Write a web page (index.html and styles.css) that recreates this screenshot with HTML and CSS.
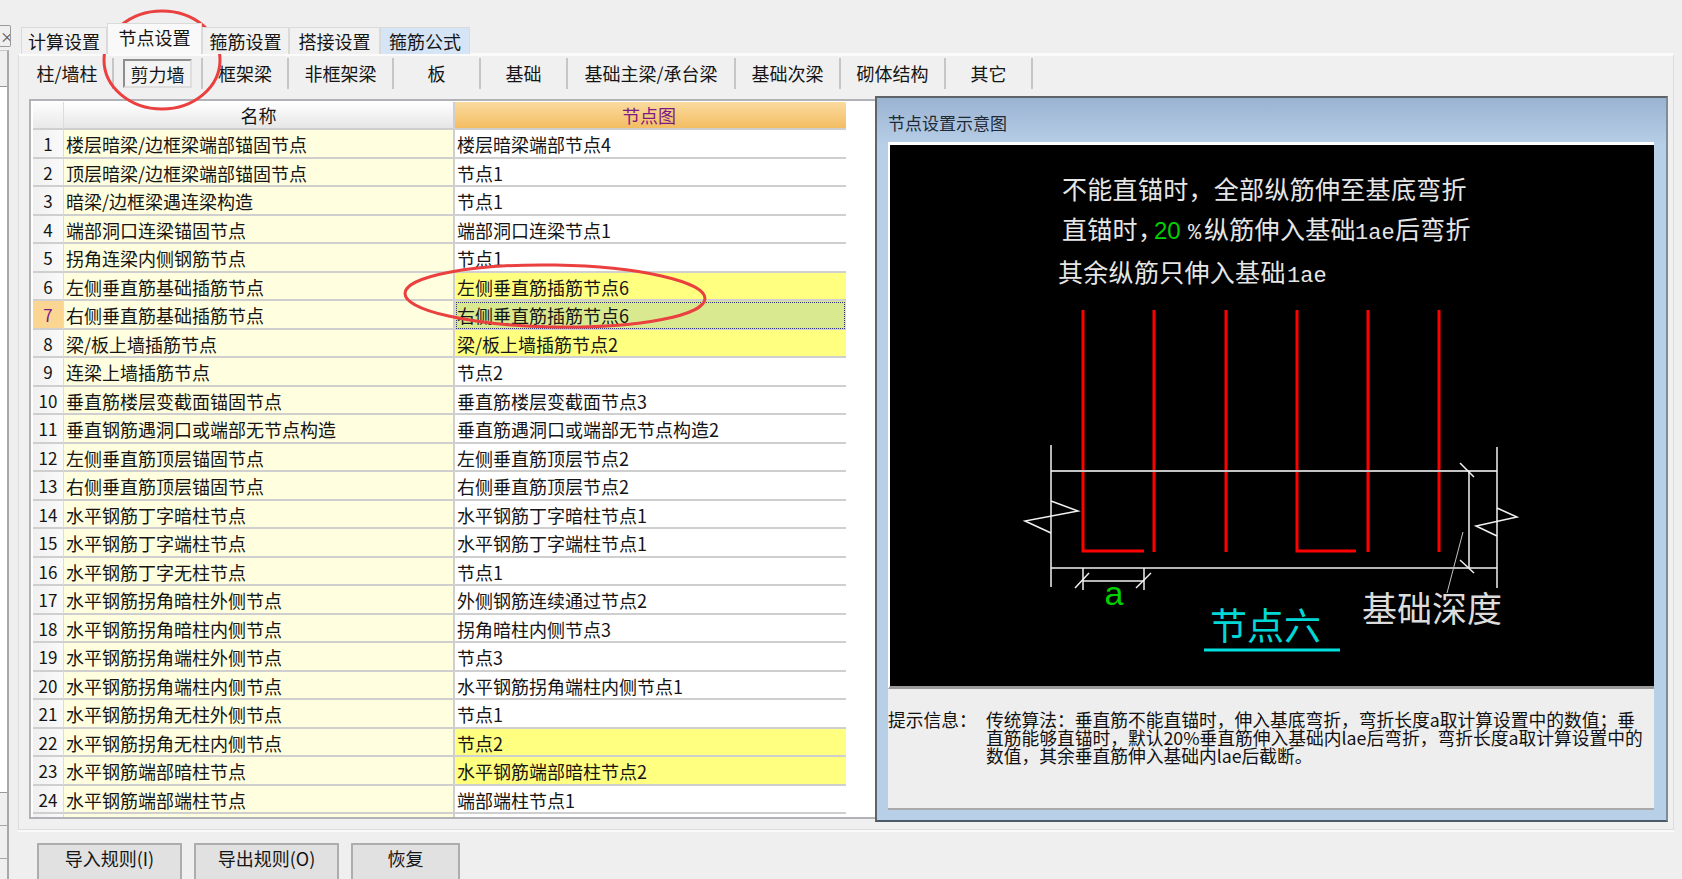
FILE: index.html
```html
<!DOCTYPE html>
<html lang="zh-CN">
  <head>
    <meta charset="UTF-8" />
    <title>节点设置</title>
    <link rel="stylesheet" href="styles.css">
  </head>
  <body>
    <div class="strip">
      <div class="strip-close">×</div>
      <div class="strip-box">
        <div class="strip-list"></div>
        <div class="strip-cell"></div>
        <div class="strip-cell"></div>
        <div class="strip-cell"></div>
      </div>
    </div>

    <div class="main">
      <div class="tabs">
        <div class="tab tab-1">计算设置</div>
        <div class="tab tab-2 active">节点设置</div>
        <div class="tab tab-3">箍筋设置</div>
        <div class="tab tab-4">搭接设置</div>
        <div class="tab tab-5 formula">箍筋公式</div>
      </div>

      <div class="panel">
        <div class="subtabs">
          <div class="subtab s1">柱/墙柱</div>
          <div class="subtab s2"><span class="pressed">剪力墙</span></div>
          <div class="subtab s3">框架梁</div>
          <div class="subtab s4">非框架梁</div>
          <div class="subtab s5">板</div>
          <div class="subtab s6">基础</div>
          <div class="subtab s7">基础主梁/承台梁</div>
          <div class="subtab s8">基础次梁</div>
          <div class="subtab s9">砌体结构</div>
          <div class="subtab s10">其它</div>
        </div>

        <div class="content">
          <div class="grid">
            <div class="row head">
              <div class="num"></div>
              <div class="name">名称</div>
              <div class="node">节点图</div>
            </div>
            <div class="row"><div class="num">1</div><div class="name">楼层暗梁/边框梁端部锚固节点</div><div class="node">楼层暗梁端部节点4</div></div>
            <div class="row"><div class="num">2</div><div class="name">顶层暗梁/边框梁端部锚固节点</div><div class="node">节点1</div></div>
            <div class="row"><div class="num">3</div><div class="name">暗梁/边框梁遇连梁构造</div><div class="node">节点1</div></div>
            <div class="row"><div class="num">4</div><div class="name">端部洞口连梁锚固节点</div><div class="node">端部洞口连梁节点1</div></div>
            <div class="row"><div class="num">5</div><div class="name">拐角连梁内侧钢筋节点</div><div class="node">节点1</div></div>
            <div class="row changed"><div class="num">6</div><div class="name">左侧垂直筋基础插筋节点</div><div class="node">左侧垂直筋插筋节点6</div></div>
            <div class="row selected"><div class="num">7</div><div class="name">右侧垂直筋基础插筋节点</div><div class="node">右侧垂直筋插筋节点6</div></div>
            <div class="row changed"><div class="num">8</div><div class="name">梁/板上墙插筋节点</div><div class="node">梁/板上墙插筋节点2</div></div>
            <div class="row"><div class="num">9</div><div class="name">连梁上墙插筋节点</div><div class="node">节点2</div></div>
            <div class="row"><div class="num">10</div><div class="name">垂直筋楼层变截面锚固节点</div><div class="node">垂直筋楼层变截面节点3</div></div>
            <div class="row"><div class="num">11</div><div class="name">垂直钢筋遇洞口或端部无节点构造</div><div class="node">垂直筋遇洞口或端部无节点构造2</div></div>
            <div class="row"><div class="num">12</div><div class="name">左侧垂直筋顶层锚固节点</div><div class="node">左侧垂直筋顶层节点2</div></div>
            <div class="row"><div class="num">13</div><div class="name">右侧垂直筋顶层锚固节点</div><div class="node">右侧垂直筋顶层节点2</div></div>
            <div class="row"><div class="num">14</div><div class="name">水平钢筋丁字暗柱节点</div><div class="node">水平钢筋丁字暗柱节点1</div></div>
            <div class="row"><div class="num">15</div><div class="name">水平钢筋丁字端柱节点</div><div class="node">水平钢筋丁字端柱节点1</div></div>
            <div class="row"><div class="num">16</div><div class="name">水平钢筋丁字无柱节点</div><div class="node">节点1</div></div>
            <div class="row"><div class="num">17</div><div class="name">水平钢筋拐角暗柱外侧节点</div><div class="node">外侧钢筋连续通过节点2</div></div>
            <div class="row"><div class="num">18</div><div class="name">水平钢筋拐角暗柱内侧节点</div><div class="node">拐角暗柱内侧节点3</div></div>
            <div class="row"><div class="num">19</div><div class="name">水平钢筋拐角端柱外侧节点</div><div class="node">节点3</div></div>
            <div class="row"><div class="num">20</div><div class="name">水平钢筋拐角端柱内侧节点</div><div class="node">水平钢筋拐角端柱内侧节点1</div></div>
            <div class="row"><div class="num">21</div><div class="name">水平钢筋拐角无柱外侧节点</div><div class="node">节点1</div></div>
            <div class="row changed"><div class="num">22</div><div class="name">水平钢筋拐角无柱内侧节点</div><div class="node">节点2</div></div>
            <div class="row changed"><div class="num">23</div><div class="name">水平钢筋端部暗柱节点</div><div class="node">水平钢筋端部暗柱节点2</div></div>
            <div class="row"><div class="num">24</div><div class="name">水平钢筋端部端柱节点</div><div class="node">端部端柱节点1</div></div>
            <div class="row"><div class="num"></div><div class="name"></div><div class="node"></div></div>
          </div>

          <div class="preview-panel">
            <div class="preview-title">节点设置示意图</div>
            <div class="preview">
              <!-- viewBox uses page coordinates, easier to compare with the picture -->
              <svg class="drawing" viewBox="890 145 764 541" width="764" height="541">
                <text class="note" x="1062" y="199">不能直锚时，全部纵筋伸至基底弯折</text>
                <text class="note" x="1062" y="239">直锚时，</text>
                <text class="note-green" x="1154" y="239">20</text>
                <text class="note-mono" x="1188" y="239">%</text>
                <text class="note" x="1204" y="239">纵筋伸入基础</text>
                <text class="note-mono" x="1355" y="239">1ae</text>
                <text class="note" x="1395" y="239">后弯折</text>
                <text class="note" x="1058" y="282">其余纵筋只伸入基础</text>
                <text class="note-mono" x="1287" y="282">1ae</text>

                <g class="rebar">
                  <path d="M1083 310V551H1144" />
                  <path d="M1154 310V552" />
                  <path d="M1226 310V552" />
                  <path d="M1297 310V551H1356" />
                  <path d="M1368 310V552" />
                  <path d="M1439 310V552" />
                </g>

                <g class="lines">
                  <path class="dim" d="M1051 471H1497" />
                  <path d="M1051 445V587" />
                  <path d="M1497 447V588" />
                  <path d="M1051 568H1497" />
                  <path d="M1051 501L1078 511L1025 521L1051 533" />
                  <path d="M1497 508L1517 517L1476 526L1497 536" />
                  <path d="M1469 471V568" />
                  <path d="M1460 463L1474 477" />
                  <path d="M1460 560L1474 573" />
                  <path d="M1083 568V590" />
                  <path d="M1144 568V590" />
                  <path d="M1083 581H1144" />
                  <path d="M1075 588L1089 573" />
                  <path d="M1136 588L1151 573" />
                  <path class="dim" d="M1463 532L1447 593" />
                </g>

                <text class="label-a" x="1114" y="605">a</text>
                <text class="label-depth" x="1362" y="622">基础深度</text>
                <text class="label-node" x="1210" y="640">节点六</text>
                <path class="label-line" d="M1204 650H1340" />
              </svg>
            </div>
            <div class="info">
              <div class="info-label">提示信息：</div>
              <div class="info-text">传统算法：垂直筋不能直锚时，伸入基底弯折，弯折长度a取计算设置中的数值；垂<br>直筋能够直锚时，默认20%垂直筋伸入基础内lae后弯折，弯折长度a取计算设置中的<br>数值，其余垂直筋伸入基础内lae后截断。</div>
            </div>
          </div>
        </div>
      </div>

      <div class="footer">
        <button class="btn btn-1">导入规则(I)</button>
        <button class="btn btn-1">导出规则(O)</button>
        <button class="btn btn-2">恢复</button>
      </div>
    </div>

    <!-- red marks drawn over the screenshot -->
    <svg class="marks" width="1682" height="879">
      <ellipse cx="162" cy="60" rx="58" ry="49" />
      <ellipse cx="555" cy="296" rx="150" ry="31" transform="rotate(1 555 296)" />
    </svg>
  </body>
</html>
```

FILE: styles.css
```css
* {
  box-sizing: border-box;
}
html,
body {
  margin: 0;
  height: 100%;
}
body {
  position: relative;
  display: flex;
  width: 1682px;
  height: 879px;
  overflow: hidden;
  background: #efefef;
  color: #151515;
  font-family: "Noto Sans CJK SC", sans-serif;
  font-size: 18px;
}

/* window behind, cut off at the left */
.strip {
  width: 18px;
  flex: none;
  padding-top: 25px;
}
.strip-close {
  width: 11px;
  height: 22px;
  border: 1px solid #9a9a9a;
  border-left: none;
  border-radius: 0 2px 2px 0;
  font-size: 14px;
  line-height: 20px;
  color: #555;
  overflow: hidden;
  text-align: right;
}
.strip-box {
  width: 9px;
  margin-top: 3px;
  padding-top: 35px;
  border-top: 1px solid #c8c8c8;
  border-right: 2px solid #a8a8a8;
}
.strip-list {
  height: 707px;
  background: #fff;
  border-top: 1px solid #999;
  border-bottom: 1px solid #999;
}
.strip-cell {
  height: 33px;
  border-bottom: 1px solid #a8a8a8;
}

.main {
  width: 1656px;
  flex: none;
  padding-top: 24px;
}

.tabs {
  display: flex;
  align-items: flex-end;
  height: 30px;
  padding-left: 3px;
  position: relative;
  z-index: 1;
}
.tab {
  height: 27px;
  line-height: 26px;
  text-align: center;
  background: #f1f1f1;
  border: 1px solid #dadada;
  border-bottom: none;
}
.tab.active {
  height: 31px;
  line-height: 26px;
  background: #f9f9f9;
}
.tab.formula {
  background: #d5e5f5;
}
.tab-1 { width: 86px; }
.tab-2 { width: 95px; }
.tab-3 { width: 87px; }
.tab-4 { width: 91px; }
.tab-5 { width: 90px; }

.panel {
  height: 777px;
  margin-top: -1px;
  border: 1px solid #dcdcdc;
  border-top: 3px solid #fbfbfb;
  background: #f0f0f0;
}

.subtabs {
  display: flex;
  align-items: center;
  height: 31px;
  margin-top: 2px;
  padding-left: 3px;
}
.subtab {
  height: 100%;
  line-height: 30px;
  text-align: center;
  border-right: 2px solid #c6c6c6;
}
.s1 { width: 92px; }
.s2 { width: 89px; }
.s3 { width: 86px; }
.s4 { width: 105px; }
.s5 { width: 87px; }
.s6 { width: 87px; }
.s7 { width: 168px; }
.s8 { width: 105px; }
.s9 { width: 105px; }
.s10 { width: 87px; }
.pressed {
  display: block;
  width: 69px;
  height: 29px;
  margin: 1px 0 0 9px;
  background: #f3f3f3;
  border: 2px solid #dedede;
  border-top-color: #8e8e8e;
  border-left-color: #8e8e8e;
  line-height: 27px;
}

.content {
  display: flex;
  margin-top: 5px;
  padding-left: 10px;
}

.grid {
  width: 847px;
  height: 720px;
  margin-top: 5px;
  padding: 1px 0 0 2px;
  overflow: hidden;
  background: #fff;
  border: 2px solid #b0b2b6;
  border-right: none;
}
.row {
  display: flex;
  height: 28.5px;
  line-height: 28px;
}
.row.head {
  height: 28px;
  line-height: 26px;
}
.num {
  width: 31px;
  flex: none;
  text-align: center;
  font-size: 17px;
  background: linear-gradient(to right, #f0f0f0, #fafafa);
  border-bottom: 2px solid #cfcfcf;
  border-right: 1px solid #dcdcdc;
}
.name {
  width: 391px;
  flex: none;
  padding-left: 2px;
  background: #ffffe0;
  border-bottom: 2px solid #cfcfcf;
  border-right: 2px solid #cfcfcf;
  white-space: nowrap;
}
.node {
  width: 391px;
  flex: none;
  padding-left: 2px;
  background: #fff;
  border-bottom: 2px solid #cfcfcf;
  white-space: nowrap;
}
.head .num {
  background: linear-gradient(#fdfdfd, #e9e9e9);
}
.head .name {
  padding: 0;
  text-align: center;
  background: linear-gradient(#ffffff, #e6e6e6);
}
.head .node {
  padding: 0 3px 0 0;
  text-align: center;
  color: #7c1a86;
  background: linear-gradient(#fadb9f, #f3bd62);
}
.changed .node {
  background: #ffff80;
}
.selected .num {
  color: #7c1a86;
  background: #fbd592;
}
.selected .node {
  background: #d9e98f;
  outline: 1px dotted #33337a;
  outline-offset: -2px;
}

.preview-panel {
  width: 793px;
  height: 726px;
  margin-top: 2px;
  margin-left: -1px;
  padding: 0 12px 11px 11px;
  background: linear-gradient(#9ab3d1, #b8cfe8 48px);
  border: 2px solid #5e6468;
  border-right-color: #7d8c9a;
  border-bottom-color: #4b5a66;
}
.preview-title {
  height: 44px;
  padding-top: 13px;
  font-size: 17px;
  line-height: 24px;
  color: #1f2a36;
}
.preview {
  height: 547px;
  background: #000;
  border-top: 3px solid #fff;
  border-left: 2px solid #fff;
  border-bottom: 3px solid #9a9a9a;
}
.drawing {
  display: block;
}
.note {
  fill: #e6e6e6;
  font-size: 25px;
  letter-spacing: 0.3px;
}
.note-mono {
  fill: #e6e6e6;
  font-family: "Liberation Mono", monospace;
  font-size: 22px;
}
.note-green {
  fill: #00d000;
  font-family: "Liberation Sans", sans-serif;
  font-size: 24px;
}
.rebar path {
  fill: none;
  stroke: #ff0000;
  stroke-width: 3;
}
.lines path {
  fill: none;
  stroke: #f2f2f2;
  stroke-width: 1.5;
}
.lines .dim {
  stroke: #c4c4c4;
  stroke-width: 2;
}
.lines .dim:last-child {
  stroke-width: 1;
}
.label-a {
  fill: #00d000;
  font-family: "Liberation Sans", sans-serif;
  font-size: 34px;
  text-anchor: middle;
}
.label-depth {
  fill: #dcdcdc;
  font-size: 35px;
}
.label-node {
  fill: #00d8d8;
  font-size: 37px;
}
.label-line {
  stroke: #00e0e0;
  stroke-width: 3;
}

.info {
  display: flex;
  height: 121px;
  padding: 21px 0 0 0;
  background: #eeeeee;
  border-bottom: 2px solid #a9a9a9;
  font-size: 17.75px;
  line-height: 18px;
  color: #111;
}
.info-label {
  width: 98px;
  flex: none;
}
.info-text {
  white-space: nowrap;
}

.footer {
  display: flex;
  gap: 12px;
  height: 48px;
  padding: 11px 0 0 19px;
  border-top: 2px solid #fafafa;
}
.btn {
  height: 38px;
  padding: 0 0 8px 0;
  font-family: inherit;
  font-size: 18px;
  color: #151515;
  background: #e1e1e1;
  border: 2px solid #adadad;
  border-radius: 0;
}
.btn-1 {
  width: 145px;
}
.btn-2 {
  width: 109px;
}

.marks {
  position: absolute;
  left: 0;
  top: 0;
  pointer-events: none;
}
.marks ellipse {
  fill: none;
  stroke: #ea4040;
  stroke-width: 3;
}
```
